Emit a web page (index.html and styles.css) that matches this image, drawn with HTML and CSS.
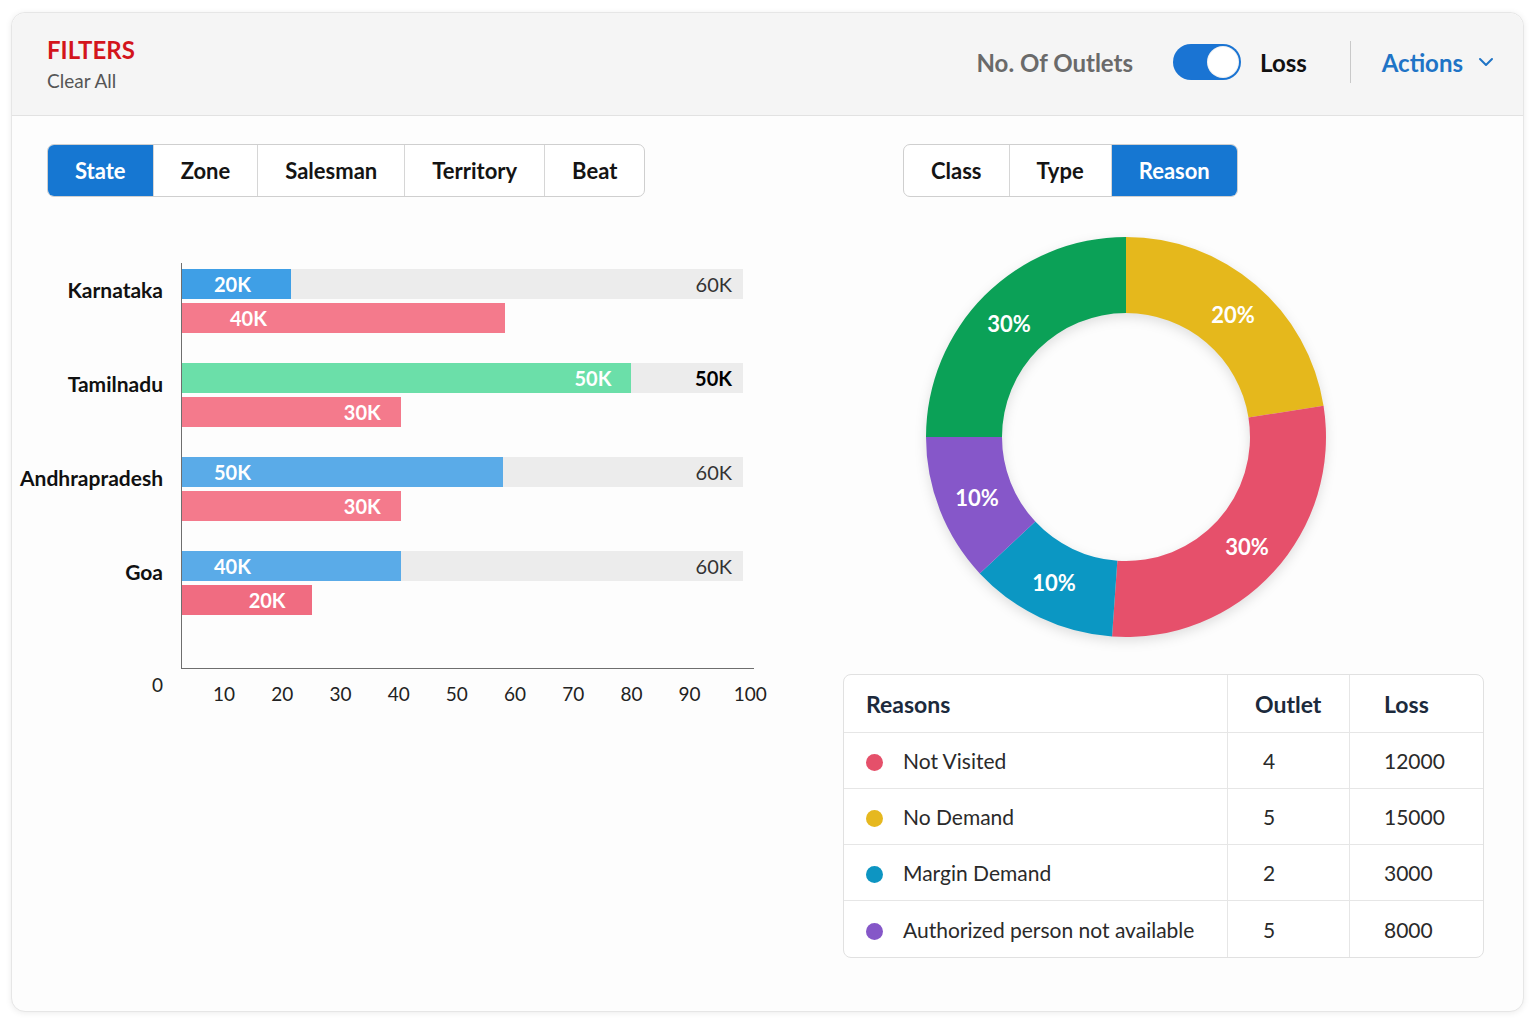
FILE: index.html
```html
<!DOCTYPE html>
<html lang="en">
<head>
    <meta charset="UTF-8">
    <meta name="viewport" content="width=device-width, initial-scale=1.0">
    <title>Outlet Loss</title>
    <link rel="stylesheet" href="styles.css">
</head>
<body>

    <div class="dashboard-card">
        <div class="filter-bar">
            <div class="filter-title">
                <h2>FILTERS</h2>
                <a href="#" class="clear-link">Clear All</a>
            </div>
            <div class="filter-actions">
                <span class="toggle-label">No. Of Outlets</span>
                <div class="toggle"><span class="toggle-knob"></span></div>
                <span class="toggle-label active">Loss</span>
                <span class="divider"></span>
                <button class="actions-btn">
                    Actions
                    <svg width="16" height="10" viewBox="0 0 16 10"><polyline points="2,2 8,8 14,2" fill="none" stroke="currentColor" stroke-width="2" stroke-linecap="round" stroke-linejoin="round"/></svg>
                </button>
            </div>
        </div>

        <div class="dashboard-body">
            <div class="left-panel">
                <div class="segmented">
                    <button class="active">State</button>
                    <button>Zone</button>
                    <button>Salesman</button>
                    <button>Territory</button>
                    <button>Beat</button>
                </div>

                <div class="bar-chart">
                    <div class="bar-labels">
                        <span>Karnataka</span>
                        <span>Tamilnadu</span>
                        <span>Andhrapradesh</span>
                        <span>Goa</span>
                    </div>
                    <div class="bar-plot">
                        <div class="bar-group">
                            <div class="bar-track">
                                <div class="bar-fill blue dark" style="width: 19.4%">20K</div>
                                <span class="bar-total">60K</span>
                            </div>
                            <div class="bar-track empty">
                                <div class="bar-fill pink wide" style="width: 57.5%">40K</div>
                            </div>
                        </div>
                        <div class="bar-group">
                            <div class="bar-track">
                                <div class="bar-fill green end" style="width: 80.1%">50K</div>
                                <span class="bar-total strong">50K</span>
                            </div>
                            <div class="bar-track empty">
                                <div class="bar-fill pink end" style="width: 39%">30K</div>
                            </div>
                        </div>
                        <div class="bar-group">
                            <div class="bar-track">
                                <div class="bar-fill blue" style="width: 57.3%">50K</div>
                                <span class="bar-total">60K</span>
                            </div>
                            <div class="bar-track empty">
                                <div class="bar-fill pink end" style="width: 39%">30K</div>
                            </div>
                        </div>
                        <div class="bar-group">
                            <div class="bar-track">
                                <div class="bar-fill blue" style="width: 39%">40K</div>
                                <span class="bar-total">60K</span>
                            </div>
                            <div class="bar-track empty">
                                <div class="bar-fill pink end short" style="width: 23.1%">20K</div>
                            </div>
                        </div>
                    </div>
                    <div class="axis-zero">0</div>
                    <div class="axis-ticks">
                        <span>10</span><span>20</span><span>30</span><span>40</span><span>50</span>
                        <span>60</span><span>70</span><span>80</span><span>90</span><span>100</span>
                    </div>
                </div>
            </div>

            <div class="right-panel">
                <div class="segmented reason-tabs">
                    <button>Class</button>
                    <button>Type</button>
                    <button class="active">Reason</button>
                </div>

                <!-- donut: yellow, red, blue, purple, green clockwise from 12 o'clock -->
                <svg class="donut" width="400" height="400" viewBox="0 0 400 400">
                    <g class="donut-ring">
                        <path fill="#e5b81c" d="M200 0 A200 200 0 0 1 397.54 168.71 L322.47 180.60 A124 124 0 0 0 200 76 Z"/>
                        <path fill="#e6506b" d="M397.54 168.71 A200 200 0 0 1 186.05 399.51 L191.35 323.70 A124 124 0 0 0 322.47 180.60 Z"/>
                        <path fill="#0b97c3" d="M186.05 399.51 A200 200 0 0 1 53.73 336.40 L109.31 284.57 A124 124 0 0 0 191.35 323.70 Z"/>
                        <path fill="#8657c9" d="M53.73 336.40 A200 200 0 0 1 0 200 L76 200 A124 124 0 0 0 109.31 284.57 Z"/>
                        <path fill="#0ba157" d="M0 200 A200 200 0 0 1 200 0 L200 76 A124 124 0 0 0 76 200 Z"/>
                    </g>
                    <g class="donut-labels">
                        <text x="307" y="80">20%</text>
                        <text x="321" y="312">30%</text>
                        <text x="128" y="348">10%</text>
                        <text x="51" y="263">10%</text>
                        <text x="83" y="89">30%</text>
                    </g>
                </svg>

                <table class="reason-table">
                    <colgroup>
                        <col class="col-reason">
                        <col class="col-outlet">
                        <col class="col-loss">
                    </colgroup>
                    <thead>
                        <tr>
                            <th>Reasons</th>
                            <th class="outlet-head">Outlet</th>
                            <th>Loss</th>
                        </tr>
                    </thead>
                    <tbody>
                        <tr>
                            <td><span class="dot red"></span>Not Visited</td>
                            <td class="num">4</td>
                            <td>12000</td>
                        </tr>
                        <tr>
                            <td><span class="dot yellow"></span>No Demand</td>
                            <td class="num">5</td>
                            <td>15000</td>
                        </tr>
                        <tr>
                            <td><span class="dot blue"></span>Margin Demand</td>
                            <td class="num">2</td>
                            <td>3000</td>
                        </tr>
                        <tr>
                            <td><span class="dot purple"></span>Authorized person not available</td>
                            <td class="num">5</td>
                            <td>8000</td>
                        </tr>
                    </tbody>
                </table>
            </div>
        </div>
    </div>

</body>
</html>
```

FILE: styles.css
```css
* {
    margin: 0;
    padding: 0;
    box-sizing: border-box;
}

body {
    font-family: Lato, "Open Sans", sans-serif;
    background: #ffffff;
    color: #1a1a1a;
    padding: 12px 12px 12px 11px;
}

button {
    font-family: inherit;
    border: none;
    background: none;
    cursor: pointer;
}

.dashboard-card {
    height: 1000px;
    border: 1px solid #e6e6e6;
    border-radius: 14px;
    background: #fdfdfd;
    box-shadow: 0 1px 6px rgba(0, 0, 0, 0.08);
}

/* top filter bar */
.filter-bar {
    height: 103px;
    display: flex;
    align-items: center;
    justify-content: space-between;
    padding: 0 29px 4px 35px;
    background: #f5f5f5;
    border-bottom: 1px solid #e2e2e2;
    border-radius: 14px 14px 0 0;
}

.filter-title {
    padding-top: 5px;
}

.filter-title h2 {
    font-size: 24px;
    line-height: 28px;
    font-weight: 700;
    color: #d3151c;
    margin-bottom: 4px;
}

.clear-link {
    display: block;
    font-size: 19px;
    line-height: 26px;
    color: #555;
    text-decoration: none;
}

.filter-actions {
    display: flex;
    align-items: center;
}

.toggle-label {
    font-size: 24px;
    font-weight: 700;
    color: #6a6a6a;
}

.toggle-label.active {
    color: #111;
}

.toggle {
    width: 68px;
    height: 36px;
    margin: 0 19px 0 40px;
    padding: 2px;
    border-radius: 18px;
    background: #1a74d3;
    display: flex;
    justify-content: flex-end;
}

.toggle-knob {
    width: 32px;
    height: 32px;
    border-radius: 50%;
    background: #fff;
    box-shadow: inset 0 0 0 1px rgba(0, 0, 0, 0.06);
}

.divider {
    width: 1px;
    height: 42px;
    background: #c9c9c9;
    margin: 0 31px 0 43px;
}

.actions-btn {
    display: flex;
    align-items: center;
    gap: 15px;
    font-size: 24px;
    font-weight: 700;
    color: #1f74c6;
}

/* body */
.dashboard-body {
    display: flex;
    gap: 56px;
    padding: 28px 41px 0 35px;
}

.left-panel {
    width: 740px;
}

.right-panel {
    width: 639px;
}

.segmented {
    display: inline-flex;
    height: 53px;
    border: 1px solid #cfcfcf;
    border-radius: 7px;
    overflow: hidden;
    background: #fff;
}

.segmented button {
    padding: 0 27px;
    font-size: 22px;
    font-weight: 700;
    color: #141414;
    border-left: 1px solid #d6d6d6;
}

.segmented button:first-child {
    border-left: none;
}

.segmented button.active {
    background: #1677d2;
    color: #fff;
}

.reason-tabs {
    margin-left: 60px;
}

/* horizontal bars */
.bar-chart {
    display: grid;
    grid-template-columns: 150px 573px;
    column-gap: 18px;
    margin: 66px 0 0 -34px;
}

.bar-labels {
    display: flex;
    flex-direction: column;
    gap: 30px;
    padding-top: 6px;
}

.bar-labels span {
    height: 64px;
    padding-top: 6px;
    line-height: 30px;
    text-align: right;
    font-size: 21px;
    font-weight: 700;
    color: #111;
}

.bar-plot {
    display: flex;
    flex-direction: column;
    gap: 30px;
    padding: 6px 11px 53px 0;
    border-left: 1.5px solid #6e6e6e;
    border-bottom: 1.5px solid #6e6e6e;
}

.bar-group {
    display: flex;
    flex-direction: column;
    gap: 4px;
}

.bar-track {
    height: 30px;
    display: flex;
    align-items: center;
    background: #ececec;
}

.bar-track.empty {
    background: none;
}

.bar-fill {
    height: 100%;
    display: flex;
    align-items: center;
    padding-left: 32px;
    font-size: 20px;
    font-weight: 700;
    color: #fff;
}

.bar-fill.blue { background: #5aabe8; }
.bar-fill.blue.dark { background: #3f9fe6; }
.bar-fill.green { background: #6bdfa9; }
.bar-fill.pink { background: #f47a8c; }
.bar-fill.pink.short { background: #f06c81; }

.bar-fill.wide {
    padding-left: 48px;
}

.bar-fill.end {
    justify-content: flex-end;
    padding: 0 20px 0 0;
}

.bar-fill.short {
    padding-right: 26px;
}

.bar-total {
    margin-left: auto;
    padding-right: 11px;
    font-size: 20px;
    color: #333;
}

.bar-total.strong {
    font-weight: 700;
    color: #000;
}

.axis-zero {
    padding-top: 4px;
    text-align: right;
    font-size: 19px;
    line-height: 24px;
    color: #222;
}

.axis-ticks {
    display: flex;
    padding: 13px 0 0 14px;
    font-size: 19px;
    line-height: 24px;
    color: #222;
}

.axis-ticks span {
    flex: none;
    width: 58.2px;
    text-align: center;
}

.axis-ticks span:last-child {
    padding-left: 5px;
}

/* donut */
.donut {
    display: block;
    margin: 40px 0 37px 83px;
    overflow: visible;
}

.donut-ring {
    filter: drop-shadow(0 4px 6px rgba(0, 0, 0, 0.12));
}

.donut-labels text {
    fill: #fff;
    font-family: Lato, "Open Sans", sans-serif;
    font-size: 22px;
    font-weight: 700;
    text-anchor: middle;
    dominant-baseline: middle;
}

/* reasons table */
.reason-table {
    width: 639px;
    border-collapse: separate;
    border-spacing: 0;
    border: 1px solid #e1e1e1;
    border-radius: 8px;
    background: #fff;
    table-layout: fixed;
}

.col-reason { width: 384px; }
.col-outlet { width: 122px; }
.col-loss { width: 133px; }

.reason-table th,
.reason-table td {
    text-align: left;
    border-right: 1px solid #e6e6e6;
    border-bottom: 1px solid #e6e6e6;
    padding-left: 34px;
}

.reason-table th:last-child,
.reason-table td:last-child {
    border-right: none;
}

.reason-table tbody tr:last-child td {
    border-bottom: none;
}

.reason-table th {
    height: 58px;
    font-size: 23px;
    font-weight: 700;
    color: #1c2a3c;
}

.reason-table th:first-child,
.reason-table td:first-child {
    padding-left: 22px;
}

.reason-table th.outlet-head {
    padding-left: 27px;
}

.reason-table td {
    height: 56px;
    font-size: 21px;
    color: #2a2a2a;
}

.reason-table td.num {
    padding-left: 35px;
}

.dot {
    display: inline-block;
    width: 17px;
    height: 17px;
    border-radius: 50%;
    margin-right: 20px;
    vertical-align: -2px;
}

.dot.red { background: #e5506a; }
.dot.yellow { background: #e6b81f; }
.dot.blue { background: #0d95c2; }
.dot.purple { background: #8557c8; }
```
